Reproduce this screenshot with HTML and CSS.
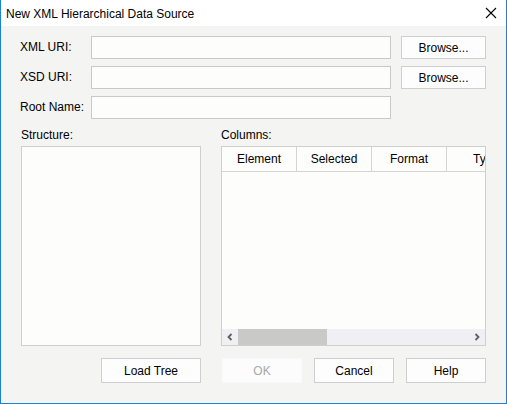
FILE: index.html
```html
<!DOCTYPE html>
<html>
<head>
<meta charset="utf-8">
<link rel="stylesheet" href="styles.css">
</head>
<body>
<div class="window">
  <div class="titlebar">
    <span class="title">New XML Hierarchical Data Source</span>
    <svg class="close" width="12" height="12" viewBox="0 0 12 12"><path d="M1 1 L11 11 M11 1 L1 11" stroke="#000" stroke-width="1.1" fill="none"/></svg>
  </div>
  <div class="content">
    <div class="form">
      <label class="lbl">XML URI:</label>
      <div class="input"></div>
      <button class="btn browse">Browse...</button>
      <label class="lbl">XSD URI:</label>
      <div class="input"></div>
      <button class="btn browse">Browse...</button>
      <label class="lbl">Root Name:</label>
      <div class="input"></div>
      <div></div>
    </div>
    <div class="panels">
      <div class="panel">
        <div class="plabel">Structure:</div>
        <div class="box tree"></div>
      </div>
      <div class="panel">
        <div class="plabel">Columns:</div>
        <div class="box table">
          <div class="thead">
            <div class="th">Element</div>
            <div class="th">Selected</div>
            <div class="th">Format</div>
            <div class="th cut">Type</div>
          </div>
          <div class="tbody"></div>
          <div class="hscroll">
            <div class="arrow"><svg width="8" height="8" viewBox="0 0 8 8"><path d="M5.5 1 L2.5 4 L5.5 7" stroke="#606060" stroke-width="1.8" fill="none"/></svg></div>
            <div class="track"><div class="thumb"></div></div>
            <div class="arrow"><svg width="8" height="8" viewBox="0 0 8 8"><path d="M2.5 1 L5.5 4 L2.5 7" stroke="#606060" stroke-width="1.8" fill="none"/></svg></div>
          </div>
        </div>
      </div>
    </div>
    <div class="actions">
      <button class="btn wide">Load Tree</button>
      <button class="btn disabled">OK</button>
      <button class="btn">Cancel</button>
      <button class="btn">Help</button>
    </div>
  </div>
</div>
</body>
</html>
```

FILE: styles.css
```css
* { box-sizing: border-box; }
html, body { margin: 0; padding: 0; }
body {
  font-family: "Liberation Sans", Arial, sans-serif;
  font-size: 12px;
  color: #000;
  background: #f4f4f2;
}
.window {
  width: 507px;
  height: 404px;
  background: #f4f4f2;
  border-left: 1px solid #1a82d6;
  border-right: 1px solid #1a82d6;
  border-bottom: 1px solid #1a82d6;
  display: flex;
  flex-direction: column;
}
.titlebar {
  height: 26px;
  background: #fff;
  display: flex;
  align-items: center;
  justify-content: space-between;
  padding: 0 9px 0 5px;
  flex: none;
}
.title { font-size: 12px; padding-top: 1px; }
.close { display: block; }
.content {
  padding: 10px 0 0 19px;
}
.form {
  display: grid;
  grid-template-columns: 71px 300px 85px;
  grid-auto-rows: 23px;
  column-gap: 0;
  row-gap: 7px;
}
.form .browse { margin-left: 10px; width: 85px; }
.lbl { display: flex; align-items: center; padding-bottom: 1px; }
.input {
  background: #fdfefc;
  border: 1px solid #c9c9c9;
}
.btn {
  font-family: inherit;
  font-size: 12px;
  color: #000;
  background: #fdfdfd;
  border: 1px solid #cfcfcf;
  padding: 0;
  height: 23px;
  width: 80px;
}
.panels {
  display: grid;
  grid-template-columns: 180px 265px;
  column-gap: 20px;
  margin-left: 1px;
  margin-top: 9px;
}
.plabel { height: 18px; }
.box {
  height: 200px;
  background: #fdfefc;
  border: 1px solid #cfcfcf;
}
.table { display: flex; flex-direction: column; overflow: hidden; }
.thead {
  display: flex;
  height: 25px;
  border-bottom: 1px solid #d4d4d4;
  flex: none;
}
.th {
  width: 75px;
  flex: none;
  text-align: center;
  line-height: 24px;
  border-right: 1px solid #d4d4d4;
}
.th.cut { width: 40px; border-right: none; text-align: left; padding-left: 26px; overflow: hidden; white-space: nowrap; }
.tbody { flex: 1; }
.hscroll {
  height: 16px;
  display: flex;
  background: #f0eff3;
  flex: none;
}
.arrow {
  width: 16px;
  display: flex;
  align-items: center;
  justify-content: center;
  flex: none;
}
.track { flex: 1; }
.thumb { width: 89px; height: 16px; background: #c9cac7; }
.actions {
  display: flex;
  margin-top: 12px;
  margin-left: 81px;
  gap: 12px;
}
.actions .wide { width: 100px; margin-right: 9px; }
.actions .btn { height: 25px; }
.btn.disabled { color: #a8a8a8; background: #fcfcfc; border-color: #f9f9f9; }
```
